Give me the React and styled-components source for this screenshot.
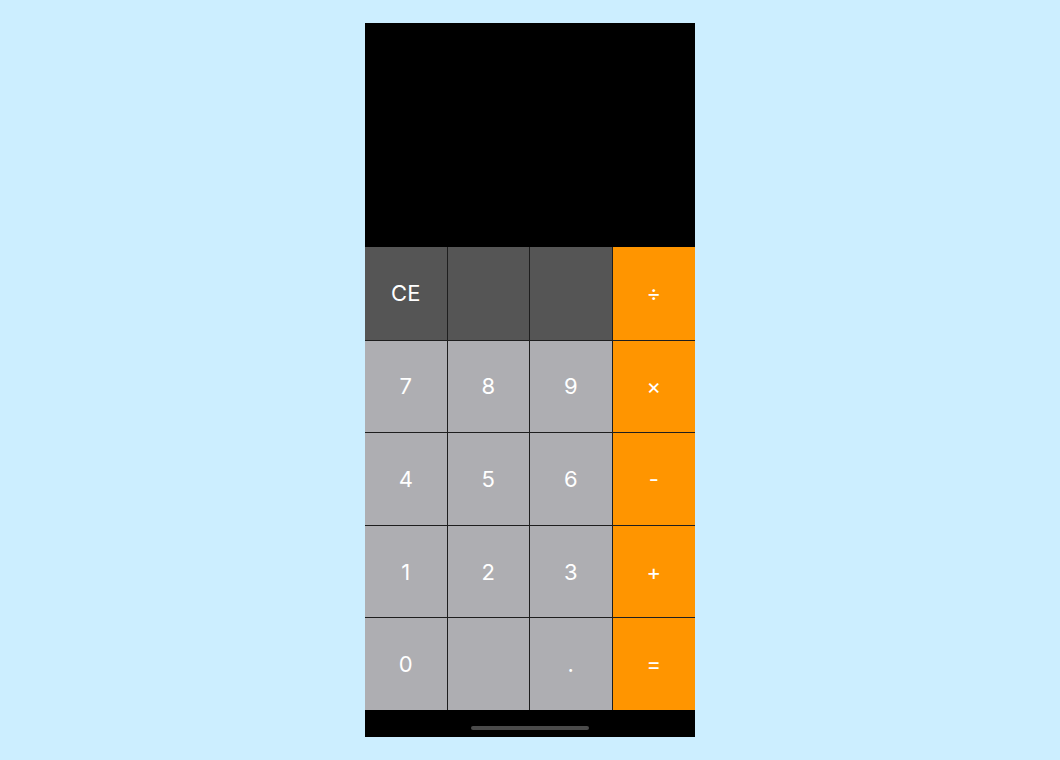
import React from 'react';
import styled, { createGlobalStyle } from 'styled-components';

const GlobalStyle = createGlobalStyle`
  html, body {
    margin: 0;
    padding: 0;
    background: #cceeff;
    font-family: Inter, "Liberation Sans", Arial, sans-serif;
  }
`;

const keys = [
  { label: 'CE', type: 'fn' },
  { label: '', type: 'fn' },
  { label: '', type: 'fn' },
  { label: '÷', type: 'op' },
  { label: '7' },
  { label: '8' },
  { label: '9' },
  { label: '×', type: 'op' },
  { label: '4' },
  { label: '5' },
  { label: '6' },
  { label: '-', type: 'op' },
  { label: '1' },
  { label: '2' },
  { label: '3' },
  { label: '+', type: 'op' },
  { label: '0' },
  { label: '' },
  { label: '.' },
  { label: '=', type: 'op' },
];

const colors = {
  fn: '#555555',
  op: '#ff9500',
  num: '#aeaeb2',
};

export default function App() {
  return (
    <>
      <GlobalStyle />
      <Page>
        <Phone>
          <Display />
          <Keypad>
            {keys.map((k, i) => (
              <Key
                key={i}
                $type={k.type || 'num'}
                $last={i % 4 === 3}
                $firstRow={i < 4}
              >
                {k.label}
              </Key>
            ))}
          </Keypad>
          <HomeBar>
            <HomeIndicator />
          </HomeBar>
        </Phone>
      </Page>
    </>
  );
}

const Page = styled.div`
  min-height: 100vh;
  display: flex;
  align-items: center;
  justify-content: center;
`;

const Phone = styled.div`
  width: 330px;
  height: 714px;
  background: #000;
  display: flex;
  flex-direction: column;
`;

const Display = styled.div`
  flex: 1;
  background: #000;
`;

const Keypad = styled.div`
  display: grid;
  grid-template-columns: repeat(4, 1fr);
  grid-template-rows: repeat(5, 92.6px);
`;

const Key = styled.button`
  border: none;
  border-right: ${p => (p.$last ? 'none' : '1px solid #1e1e1e')};
  border-top: ${p => (p.$firstRow ? 'none' : '1px solid #1e1e1e')};
  margin: 0;
  padding: 0;
  background: ${p => colors[p.$type]};
  color: #fff;
  font-family: Inter, "Liberation Sans", Arial, sans-serif;
  font-size: 22px;
  font-weight: 400;
  display: flex;
  align-items: center;
  justify-content: center;
  cursor: pointer;
`;

const HomeBar = styled.div`
  height: 27px;
  background: #000;
  display: flex;
  align-items: flex-end;
  justify-content: center;
  padding-bottom: 7px;
  box-sizing: border-box;
`;

const HomeIndicator = styled.div`
  width: 118px;
  height: 4px;
  border-radius: 2px;
  background: #4a4a4a;
`;
